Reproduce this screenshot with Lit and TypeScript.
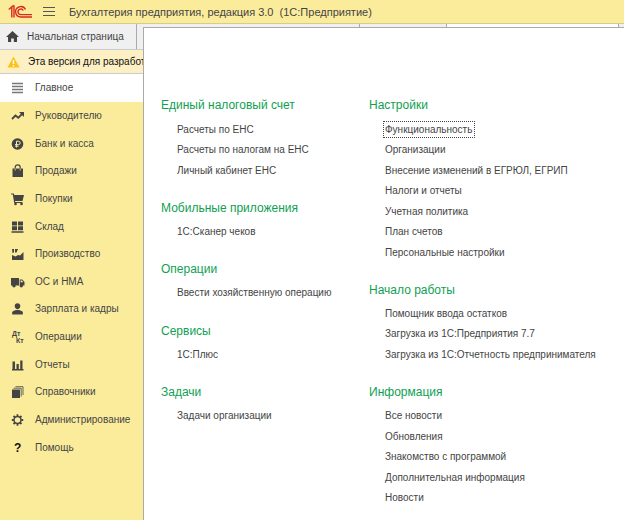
import { LitElement, html, svg, css } from "lit";
import { customElement } from "lit/decorators.js";

const ICONS: Record<string, unknown> = {
  lines: svg`<path d="M3 3.500h11M3 6.500h11M3 9.500h11M3 12.500h11" stroke="#777" stroke-width="1.300" fill="none"/>`,
  trend: svg`<path d="M3 11 6.500 7.500l2.800 2.300L13 6" fill="none" stroke="#444" stroke-width="1.800"/><path d="M10 4h5v5z"/>`,
  ruble: svg`<circle cx="8.500" cy="8" r="5.800"/><path d="M7.500 11.500V5.200h2a1.700 1.700 0 0 1 0 3.400H6M6 10.200h3.600" stroke="#fbec9c" stroke-width="1" fill="none"/>`,
  bag: svg`<path d="M3.500 5.500h10.500v8.500H3.500z"/><path d="M6.200 8V4.300a2.500 2.500 0 0 1 5 0V8" fill="none" stroke="#444" stroke-width="1.200"/><path d="M6.200 5.500v2M11.200 5.500v2" stroke="#fbec9c" stroke-width=".8"/>`,
  cart: svg`<path d="M2 2.500h2.800l.5 1.500h9.700l-1.500 6H6l.3 1H13.500v1H5.200L3.800 3.500H2z"/><circle cx="6.500" cy="13" r="1.300"/><circle cx="12.500" cy="13" r="1.300"/>`,
  store: svg`<path d="M3 2.500h5v4H3zM9 2.500h5v4H9zM3 7.200h5v4H3zM9 7.200h5v4H9zM2.500 12.200h12v1.600h-12z"/>`,
  factory: svg`<path d="M3 14V9l3.500 1.500L9 9l2 .5L14.500 6v8zM3 3h2v3.500L3.500 7zM6 3h3L7.500 6.500H6z"/>`,
  truck: svg`<path d="M2 4h8v7.500H2zM10.700 5.500h2.600L15.500 8v3.500h-4.800z"/><circle cx="5" cy="11.800" r="1.700"/><circle cx="12.300" cy="11.800" r="1.700"/><path d="M11.600 6.500h1.400l1.200 1.700h-2.600z" fill="#fbec9c"/>`,
  person: svg`<path d="M8.500 2.200c1.800 0 2.800 1.200 2.800 2.800S10 8.300 8.500 8.300 5.700 6.600 5.700 5s1-2.800 2.800-2.800z"/><path d="M3.200 13.500v-2.300c0-1 2-1.700 3.800-2.200h3c1.800.5 3.800 1.200 3.800 2.200v2.300z"/>`,
  dtkt: svg`<text x="3" y="7" font-size="7" font-weight="700">Дт</text><text x="7" y="14" font-size="7" font-weight="700">Кт</text>`,
  bars: svg`<path d="M3.500 4.500H6V12H3.500zM7.500 7h2.300v5H7.500zM11.200 3.500h2.300V12h-2.300zM3 12h11.500v1.500H3z"/>`,
  books: svg`<path d="M3 5.500h8V14H3z"/><path d="M4.500 4.200h7.700V12.500M6.500 2.700h7.500V11" fill="none" stroke="#555" stroke-width=".9"/>`,
  gear: svg`<circle cx="8.500" cy="8" r="3.500" fill="none" stroke="#444" stroke-width="1.500"/><path d="M8.500 2.300v2M8.500 11.700v2M2.800 8h2M12.200 8h2M4.500 4 6 5.500M11 10.500l1.500 1.500M12.500 4 11 5.500M6 10.500 4.500 12" stroke="#444" stroke-width="1.800"/>`,
  help: svg`<text x="5" y="12" font-size="12" font-weight="700" fill="#111">?</text>`,
};

const SECTIONS: [string, string][] = [
  ["lines", "Главное"],
  ["trend", "Руководителю"],
  ["ruble", "Банк и касса"],
  ["bag", "Продажи"],
  ["cart", "Покупки"],
  ["store", "Склад"],
  ["factory", "Производство"],
  ["truck", "ОС и НМА"],
  ["person", "Зарплата и кадры"],
  ["dtkt", "Операции"],
  ["bars", "Отчеты"],
  ["books", "Справочники"],
  ["gear", "Администрирование"],
  ["help", "Помощь"],
];

type Group = { title: string; links: string[] };

const COLUMNS: Group[][] = [
  [
    { title: "Единый налоговый счет", links: ["Расчеты по ЕНС", "Расчеты по налогам на ЕНС", "Личный кабинет ЕНС"] },
    { title: "Мобильные приложения", links: ["1С:Сканер чеков"] },
    { title: "Операции", links: ["Ввести хозяйственную операцию"] },
    { title: "Сервисы", links: ["1С:Плюс"] },
    { title: "Задачи", links: ["Задачи организации"] },
  ],
  [
    {
      title: "Настройки",
      links: [
        "Функциональность",
        "Организации",
        "Внесение изменений в ЕГРЮЛ, ЕГРИП",
        "Налоги и отчеты",
        "Учетная политика",
        "План счетов",
        "Персональные настройки",
      ],
    },
    {
      title: "Начало работы",
      links: ["Помощник ввода остатков", "Загрузка из 1С:Предприятия 7.7", "Загрузка из 1С:Отчетность предпринимателя"],
    },
    {
      title: "Информация",
      links: ["Все новости", "Обновления", "Знакомство с программой", "Дополнительная информация", "Новости"],
    },
  ],
];

@customElement("app-root")
export class AppRoot extends LitElement {
  static styles = css`
    :host {
      display: grid;
      grid-template-columns: 143px 1fr;
      grid-template-rows: 24px 25px 25px 1fr;
      min-height: 100vh;
      background: #fff;
      color: #444;
      font: 10px/14px "Liberation Sans", Arial, sans-serif;
    }
    * { box-sizing: border-box; }
    button {
      border: 0;
      padding: 0;
      background: none;
      color: inherit;
      font: inherit;
    }
    a { color: inherit; text-decoration: none; }
    ul { list-style: none; margin: 0; padding: 0; }
    svg { display: block; flex: none; }
    .top {
      grid-column: 1 / 3;
      display: flex;
      align-items: center;
      gap: 10px;
      padding: 0 8px;
      background: #fbec9c;
      border-bottom: 1px solid #d6ca8c;
    }
    .title {
      margin: 0 0 0 4px;
      font: 11px/14px "Liberation Sans", Arial, sans-serif;
      white-space: pre;
    }
    .tabs {
      grid-area: 2 / 1 / 3 / 3;
      display: flex;
      background: #f0f0f0;
    }
    .tab {
      display: flex;
      align-items: center;
      gap: 8px;
      width: 137px;
      padding-left: 6px;
      border-right: 1px solid #aaa;
      white-space: nowrap;
    }
    .blank { width: 223px; }
    .short { width: 87px; }
    .current { width: 172px; background: #fff; }
    .notice {
      grid-area: 3 / 1;
      display: flex;
      align-items: center;
      gap: 8px;
      padding-left: 7px;
      white-space: nowrap;
      background: #fdf0c4;
      border-top: 1px solid #ccc;
      border-bottom: 1px solid #ccc;
      color: #111;
    }
    .side { grid-area: 4 / 1; background: #fbec9c; }
    .menu { display: flex; flex-direction: column; min-height: 387px; }
    .item { flex: 1; display: flex; }
    .entry {
      flex: 1;
      display: flex;
      align-items: center;
      gap: 9px;
      padding: 1px 0 0 9px;
      text-align: left;
      white-space: nowrap;
    }
    .selected { background: #fff; }
    .panel {
      grid-area: 2 / 2 / 5 / 3;
      display: grid;
      grid-template-columns: 208px 1fr;
      align-content: start;
      margin-top: 3px;
      padding: 50px 16px 10px 17px;
      background: #fff;
      border-top: 1px solid #aaa;
      border-left: 1px solid #aaa;
    }
    .column {
      display: grid;
      grid-template-rows: repeat(21, 1fr);
      min-height: 430px;
    }
    .group, .links { display: grid; grid-template-rows: subgrid; }
    .heading {
      grid-row: span 2;
      align-self: center;
      margin: 0;
      padding-top: 14px;
      color: #0f9f52;
      font: 12px/16px "Liberation Sans", Arial, sans-serif;
    }
    .row { display: flex; align-items: center; padding-left: 14px; }
    .link { padding: 1px 1px 0; border: 1px solid transparent; white-space: nowrap; }
    .focused { padding-right: 2px; border: 1px dotted #444; }
  `;

  private icon(name: string) {
    return html`<svg width="17" height="16" viewBox="0 0 17 16" fill="#444" aria-hidden="true">${ICONS[name]}</svg>`;
  }

  private group(g: Group) {
    const n = g.links.length;
    return html`<section class="group" style="grid-row: span ${n + 2}">
      <h2 class="heading">${g.title}</h2>
      <ul class="links" style="grid-row: span ${n}">
        ${g.links.map(
          (text) => html`<li class="row">
            <a href="#" class="link ${text === "Функциональность" ? "focused" : ""}">${text}</a>
          </li>`
        )}
      </ul>
    </section>`;
  }

  render() {
    return html`
      <header class="top">
        <svg width="25" height="14" viewBox="0 0 25 14" fill="none" stroke="#d9281e" stroke-width="1.400" role="img" aria-label="1С">
          <path d="M.8 4.500 3.800 1.800V12.500M6 12.500V1H4.200" />
          <path d="M17.500 4.500A5.200 5.200 0 1 0 13 12H24" />
          <path d="M15.300 5.500A2.800 2.800 0 1 0 13 9.600H24" />
        </svg>
        <button aria-label="Меню">
          <svg width="12" height="12" viewBox="0 0 12 12" stroke="#555"><path d="M0 1.500h12M0 5.500h12M0 9.500h12" /></svg>
        </button>
        <h1 class="title">Бухгалтерия предприятия, редакция 3.0  (1С:Предприятие)</h1>
      </header>
      <div class="tabs">
        <button class="tab">
          <svg width="13" height="12" viewBox="0 0 13 12" fill="#444"><path d="M6.500 0 0 6h2v5h3.200V7.500h2.600V11H11V6h2z" /></svg>
          Начальная страница
        </button>
        <div class="tab blank"></div>
        <div class="tab short"></div>
        <div class="tab current"></div>
      </div>
      <div class="notice" role="status">
        <svg width="13" height="12" viewBox="0 0 13 12"><path d="M6.500.5 12.500 11.500H.5z" fill="#fdc219" /><path d="M6.500 4v4M6.500 9v1.500" stroke="#fff" stroke-width="1.400" /></svg>
        Эта версия для разработ
      </div>
      <nav class="side">
        <ul class="menu">
          ${SECTIONS.map(
            ([icon, text], i) => html`<li class="item ${i === 0 ? "selected" : ""}">
              <button class="entry">${this.icon(icon)}${text}</button>
            </li>`
          )}
        </ul>
      </nav>
      <main class="panel">${COLUMNS.map((c) => html`<div class="column">${c.map((g) => this.group(g))}</div>`)}</main>
    `;
  }
}
